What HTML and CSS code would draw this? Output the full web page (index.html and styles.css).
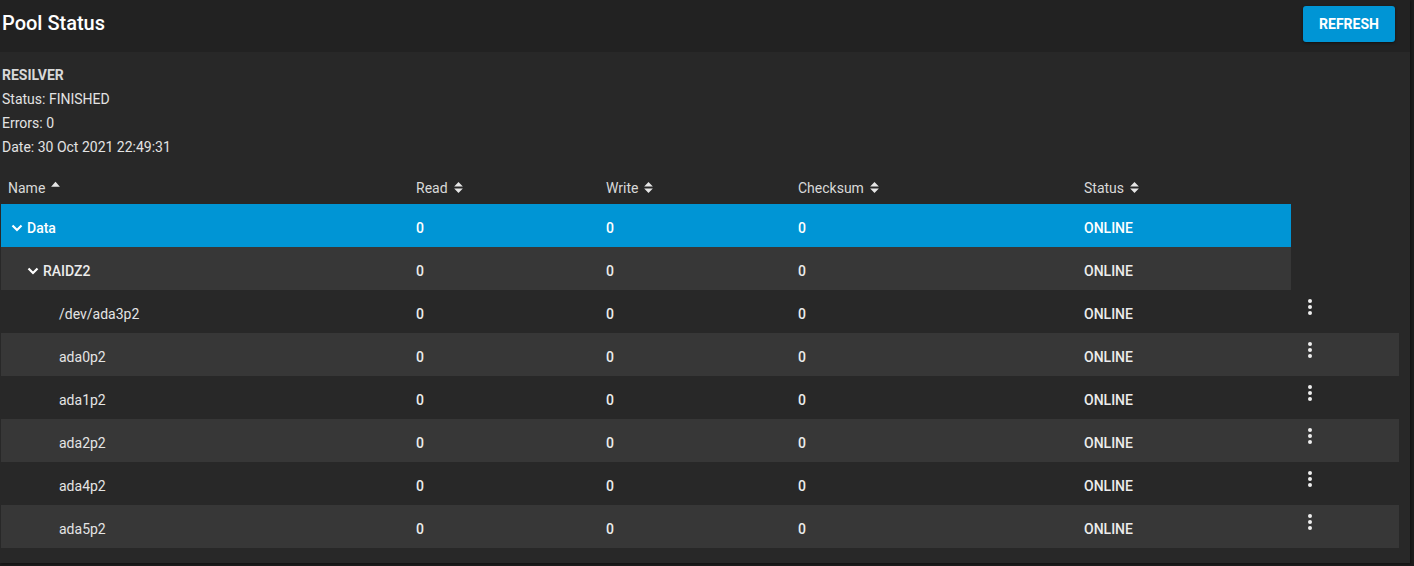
FILE: index.html
```html
<!DOCTYPE html>
<html>
<head>
	<title>Pool Status</title>
	<link rel="stylesheet" href="styles.css">
</head>
<body>
	<div class="card">
		<div class="card-head">
			<div class="title">Pool Status</div>
			<button class="btn">REFRESH</button>
		</div>
		<div class="scan">
			<div class="scan-name">RESILVER</div>
			<div>Status: FINISHED</div>
			<div>Errors: 0</div>
			<div>Date: 30 Oct 2021 22:49:31</div>
		</div>
		<div class="tbl">
			<div class="row head">
				<div class="c name">Name <svg class="sort" viewBox="0 0 10 10"><path d="M1 7 L5 2.5 L9 7 Z"/></svg></div>
				<div class="c">Read <svg class="sort" viewBox="0 0 10 12"><path d="M1 5 L5 1 L9 5 Z M1 7 L5 11 L9 7 Z"/></svg></div>
				<div class="c">Write <svg class="sort" viewBox="0 0 10 12"><path d="M1 5 L5 1 L9 5 Z M1 7 L5 11 L9 7 Z"/></svg></div>
				<div class="c">Checksum <svg class="sort" viewBox="0 0 10 12"><path d="M1 5 L5 1 L9 5 Z M1 7 L5 11 L9 7 Z"/></svg></div>
				<div class="c">Status <svg class="sort" viewBox="0 0 10 12"><path d="M1 5 L5 1 L9 5 Z M1 7 L5 11 L9 7 Z"/></svg></div>
			</div>
			<div class="row sel">
				<div class="c name lvl0"><svg class="chev" viewBox="0 0 12 8"><path d="M1.5 1.5 L6 6 L10.5 1.5"/></svg>Data</div>
				<div class="c">0</div><div class="c">0</div><div class="c">0</div><div class="c">ONLINE</div>
			</div>
			<div class="row alt">
				<div class="c name lvl1"><svg class="chev" viewBox="0 0 12 8"><path d="M1.5 1.5 L6 6 L10.5 1.5"/></svg>RAIDZ2</div>
				<div class="c">0</div><div class="c">0</div><div class="c">0</div><div class="c">ONLINE</div>
			</div>
			<div class="row disk">
				<div class="c name lvl2">/dev/ada3p2</div>
				<div class="c">0</div><div class="c">0</div><div class="c">0</div><div class="c">ONLINE</div>
				<div class="c act"><span class="dots"><i></i><i></i><i></i></span></div>
			</div>
			<div class="row disk alt">
				<div class="c name lvl2">ada0p2</div>
				<div class="c">0</div><div class="c">0</div><div class="c">0</div><div class="c">ONLINE</div>
				<div class="c act"><span class="dots"><i></i><i></i><i></i></span></div>
			</div>
			<div class="row disk">
				<div class="c name lvl2">ada1p2</div>
				<div class="c">0</div><div class="c">0</div><div class="c">0</div><div class="c">ONLINE</div>
				<div class="c act"><span class="dots"><i></i><i></i><i></i></span></div>
			</div>
			<div class="row disk alt">
				<div class="c name lvl2">ada2p2</div>
				<div class="c">0</div><div class="c">0</div><div class="c">0</div><div class="c">ONLINE</div>
				<div class="c act"><span class="dots"><i></i><i></i><i></i></span></div>
			</div>
			<div class="row disk">
				<div class="c name lvl2">ada4p2</div>
				<div class="c">0</div><div class="c">0</div><div class="c">0</div><div class="c">ONLINE</div>
				<div class="c act"><span class="dots"><i></i><i></i><i></i></span></div>
			</div>
			<div class="row disk alt">
				<div class="c name lvl2">ada5p2</div>
				<div class="c">0</div><div class="c">0</div><div class="c">0</div><div class="c">ONLINE</div>
				<div class="c act"><span class="dots"><i></i><i></i><i></i></span></div>
			</div>
		</div>
	</div>
</body>
</html>
```

FILE: styles.css
```css
body {
	margin: 0;
	background: #1c1c1c;
	font-family: Roboto, "Liberation Sans", sans-serif;
	color: #e6e6e6;
	height: 566px;
	overflow: hidden;
}

.card {
	width: 1410px;
	height: 563px;
	background: #282828;
	box-shadow: 1px 1px 2px rgba(0,0,0,0.4);
}

.card-head {
	height: 52px;
	background: #222222;
	display: flex;
	align-items: center;
	justify-content: space-between;
	padding: 0 15px 0 2px;
	box-sizing: border-box;
}

.title {
	font-size: 20px;
	font-weight: 500;
	color: #fff;
	margin-top: -6px;
}

.btn {
	width: 92px;
	height: 36px;
	margin-top: -5px;
	background: #0095d5;
	border: 0;
	border-radius: 3px;
	color: #fff;
	font-family: inherit;
	font-size: 14px;
	font-weight: 700;
	box-shadow: 0 1px 3px rgba(0,0,0,0.5);
}

.scan {
	padding: 11px 0 0 2px;
	font-size: 14px;
	line-height: 24px;
	color: #e3e3e3;
}

.scan-name {
	font-weight: 700;
	color: #d8d8d8;
}

.tbl {
	margin-top: 13px;
	margin-left: 1px;
}

.row {
	display: grid;
	grid-template-columns: 407px 190px 192px 286px 215px 108px;
	height: 43px;
	padding-top: 5px;
	box-sizing: border-box;
	align-items: center;
	font-size: 14px;
	font-weight: 500;
	color: #ececec;
	width: 1290px;
}

.row.disk {
	width: 1398px;
}

.row.head {
	height: 32px;
	padding-top: 0;
	color: #d9d9d9;
	font-weight: 400;
}

.row.alt {
	background: #373737;
}

.row.sel {
	background: #0095d5;
	color: #fff;
}

.c {
	padding-left: 8px;
	display: flex;
	align-items: center;
	white-space: nowrap;
}

.c.name {
	padding-left: 7px;
}

.row.disk .name {
	color: #e4e4e4;
	font-weight: 400;
}

.c.lvl0 { padding-left: 10px; }
.c.lvl1 { padding-left: 26px; }
.c.lvl2 { padding-left: 58px; }

.sort {
	width: 11px;
	height: 13px;
	fill: #e6e6e6;
	margin-left: 5px;
	margin-top: -2px;
}

.name .sort {
	height: 11px;
	margin-top: -8px;
}

.chev {
	width: 12px;
	height: 8px;
	fill: none;
	stroke: #fff;
	stroke-width: 2.2;
	margin-right: 4px;
}

.c.act {
	padding-left: 17px;
}

.dots {
	display: flex;
	flex-direction: column;
	gap: 2px;
	margin-top: -14px;
}

.dots i {
	width: 4px;
	height: 4px;
	border-radius: 50%;
	background: #eee;
}
```
